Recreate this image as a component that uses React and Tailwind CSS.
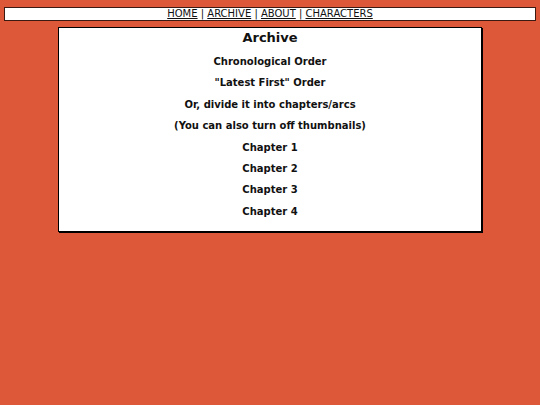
export default function App() {
  const lines = [
    "Chronological Order",
    "\"Latest First\" Order",
    "Or, divide it into chapters/arcs",
    "(You can also turn off thumbnails)",
    "Chapter 1",
    "Chapter 2",
    "Chapter 3",
    "Chapter 4",
  ];
  const nav = ["HOME", "ARCHIVE", "ABOUT", "CHARACTERS"];
  return (
    <div
      className="w-[540px] h-[405px] bg-[#dc5839] pt-[7px] text-[#111]"
      style={{ fontFamily: '"DejaVu Sans", Verdana, sans-serif' }}
    >
      <div className="mx-[4px] border border-[#3a1a12] bg-white text-center text-[10px] leading-[12px]">
        {nav.map((n, i) => (
          <span key={n}>
            {i > 0 && <span> | </span>}
            <a className="underline text-[#111]">{n}</a>
          </span>
        ))}
      </div>
      <div className="mx-auto mt-[6px] w-[424px] border border-black bg-white shadow-[1px_1px_0_#000] pt-[2px] pb-[9px] text-center font-bold">
        <h1 className="text-[13px] leading-[16px]">Archive</h1>
        <div className="mt-[5px] flex flex-col text-[10px]">
          {lines.map((l) => (
            <p key={l} className="leading-[21.4px]">
              {l}
            </p>
          ))}
        </div>
      </div>
    </div>
  );
}
